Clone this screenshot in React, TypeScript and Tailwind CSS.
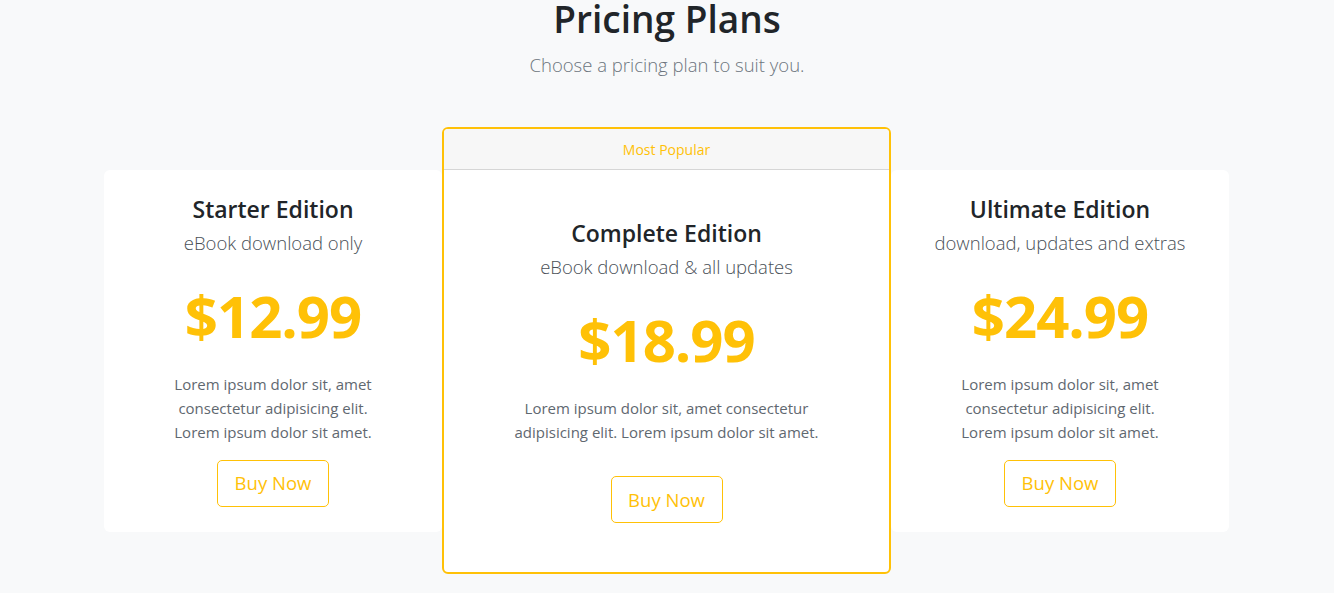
import React from "react";

const font = { fontFamily: '"Open Sans", "Noto Sans", sans-serif' };

function SideCard({ title, sub, price }: { title: string; sub: string; price: string }) {
  return (
    <div className="w-[338px] shrink-0 bg-white rounded-md pt-[25px] pb-[25px] px-6 text-center">
      <h3 className="text-[23px] leading-[28px] font-semibold text-[#212529]">{title}</h3>
      <p className="mt-[6px] text-[18.5px] leading-[28px] font-light text-[#495057]">{sub}</p>
      <div className="mt-[30px] text-[58px] leading-[58px] font-bold tracking-[-1px] text-[#ffc107]">{price}</div>
      <p className="mt-[27px] mx-auto max-w-[224px] text-[15px] leading-[24px] text-[#5f6870]">
        Lorem ipsum dolor sit, amet consectetur adipisicing elit. Lorem ipsum dolor sit amet.
      </p>
      <button className="mt-[16px] h-[47px] w-[112px] border border-[#ffc107] rounded-[5px] text-[18.5px] text-[#ffc107] bg-transparent">
        Buy Now
      </button>
    </div>
  );
}

export default function App() {
  return (
    <div className="min-h-screen bg-[#f8f9fa]" style={font}>
      <div className="text-center">
        <h1 className="text-[37px] leading-[38px] font-semibold text-[#212529]">Pricing Plans</h1>
        <p className="mt-[13px] text-[18.5px] leading-[28px] font-light text-[#6c757d]">
          Choose a pricing plan to suit you.
        </p>
      </div>
      <div className="mt-12 pr-px flex items-center justify-center">
        <SideCard title="Starter Edition" sub="eBook download only" price="$12.99" />
        <div className="relative z-10 w-[449px] shrink-0 border-2 border-[#ffc107] rounded-md bg-white overflow-hidden text-center">
          <div className="h-[41px] bg-[#f7f7f7] border-b border-[#d6d6d6] flex items-center justify-center text-[14px] text-[#ffc107]">
            Most Popular
          </div>
          <div className="pt-[49px] pb-[49px] px-12">
            <h3 className="text-[23px] leading-[28px] font-semibold text-[#212529]">Complete Edition</h3>
            <p className="mt-[6px] text-[18.5px] leading-[28px] font-light text-[#495057]">eBook download &amp; all updates</p>
            <div className="mt-[30px] text-[58px] leading-[58px] font-bold tracking-[-1px] text-[#ffc107]">$18.99</div>
            <p className="mt-[27px] text-[15px] leading-[24px] text-[#5f6870]">
              Lorem ipsum dolor sit, amet consectetur adipisicing elit. Lorem ipsum dolor sit amet.
            </p>
            <button className="mt-[32px] h-[47px] w-[112px] border border-[#ffc107] rounded-[5px] text-[18.5px] text-[#ffc107] bg-transparent">
              Buy Now
            </button>
          </div>
        </div>
        <SideCard title="Ultimate Edition" sub="download, updates and extras" price="$24.99" />
      </div>
    </div>
  );
}
